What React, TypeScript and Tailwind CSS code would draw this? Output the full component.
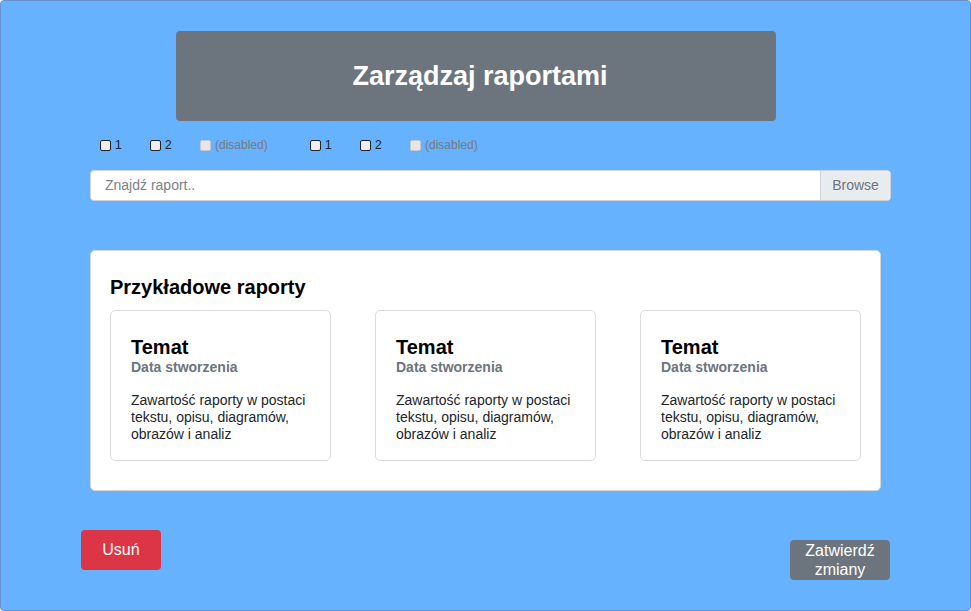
import React from "react";

function Box({ disabled }: { disabled?: boolean }) {
  return (
    <span
      className={
        "inline-block w-[11px] h-[11px] rounded-[2px] border " +
        (disabled ? "border-[#c8c8c8] bg-[#e6e6e6]" : "border-[#222] bg-[#eeeeee]")
      }
    />
  );
}

function Group() {
  return (
    <div className="flex items-center">
      <div className="flex items-center w-[50px] gap-[4px]">
        <Box />
        <span className="text-[#222]">1</span>
      </div>
      <div className="flex items-center w-[50px] gap-[4px]">
        <Box />
        <span className="text-[#222]">2</span>
      </div>
      <div className="flex items-center w-[110px] gap-[4px]">
        <Box disabled />
        <span className="text-[#7a7a7a]">(disabled)</span>
      </div>
    </div>
  );
}

function ReportCard() {
  return (
    <div className="shrink-0 w-[221px] h-[151px] border border-[#dcdcdc] rounded-[5px] px-[20px] pt-[24px] bg-white">
      <div className="text-[20px] font-bold leading-[24px] text-black">Temat</div>
      <div className="text-[14px] font-bold leading-[17px] text-[#6c757d]">Data stworzenia</div>
      <div className="mt-[16px] text-[14px] leading-[16.8px] text-[#212529]">
        Zawartość raporty w postaci tekstu, opisu, diagramów, obrazów i analiz
      </div>
    </div>
  );
}

export default function App() {
  return (
    <div
      className="w-[971px] h-[611px] bg-[#66b2ff] border border-[#6a8fcf] rounded-[4px] flex flex-col"
      style={{ fontFamily: '"Liberation Sans", Arial, sans-serif' }}
    >
      <div className="mt-[30px] ml-[175px] w-[600px] h-[90px] bg-[#6c757d] rounded-[4px] flex items-center justify-center pl-[8px]">
        <span className="text-white font-bold text-[27px]">Zarządzaj raportami</span>
      </div>

      <div className="mt-[17px] ml-[99px] flex items-center text-[12px] leading-[14px] h-[14px]">
        <Group />
        <Group />
      </div>

      <div className="mt-[18px] ml-[89px] w-[801px] h-[31px] flex bg-white border border-[#d0d4d8] rounded-[4px] overflow-hidden">
        <div className="flex-1 flex items-center pl-[14px] text-[14px] text-[#7b8289]">Znajdź raport..</div>
        <div className="w-[70px] flex items-center justify-center bg-[#e9ecef] border-l border-[#ced4da] text-[14px] text-[#6c757d]">
          Browse
        </div>
      </div>

      <div className="mt-[49px] ml-[89px] w-[791px] h-[241px] bg-white border border-[#d6d6d6] rounded-[5px] pl-[19px] pr-[19px] pt-[24px]">
        <div className="text-[20px] font-bold leading-[24px] text-black">Przykładowe raporty</div>
        <div className="mt-[11px] flex gap-[44px]">
          <ReportCard />
          <ReportCard />
          <ReportCard />
        </div>
      </div>

      <div className="mt-[39px] flex items-start justify-between pl-[80px] pr-[80px]">
        <button className="w-[80px] h-[40px] bg-[#dc3545] rounded-[4px] text-white text-[16px]">Usuń</button>
        <button className="mt-[10px] w-[100px] h-[40px] bg-[#6c757d] rounded-[4px] text-white text-[16px] leading-[19px]">
          Zatwierdź
          <br />
          zmiany
        </button>
      </div>
    </div>
  );
}
